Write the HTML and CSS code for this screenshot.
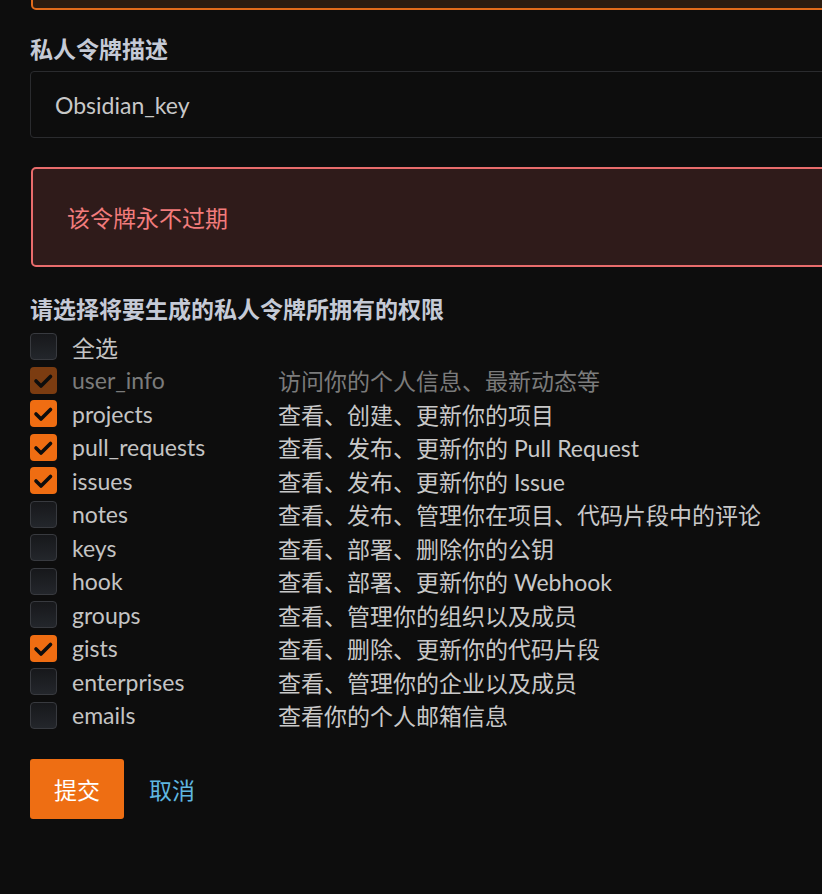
FILE: index.html
```html
<!DOCTYPE html>
<html lang="zh-CN">
<head>
<meta charset="utf-8">
<title>私人令牌</title>
<link rel="stylesheet" href="styles.css">
</head>
<body>
<div class="page">
  <div class="prev-box"></div>

  <label class="field-label">私人令牌描述</label>
  <div class="text-input">Obsidian_key</div>

  <div class="alert">该令牌永不过期</div>

  <div class="field-label perms-title">请选择将要生成的私人令牌所拥有的权限</div>

  <ul class="perms">
    <li class="perm"><span class="cb"></span><span class="name">全选</span></li>
    <li class="perm disabled"><span class="cb on"><svg viewBox="0 0 27 27"><polyline points="6,14 11,19 20.5,9.5"/></svg></span><span class="name">user_info</span><span class="desc">访问你的个人信息、最新动态等</span></li>
    <li class="perm"><span class="cb on"><svg viewBox="0 0 27 27"><polyline points="6,14 11,19 20.5,9.5"/></svg></span><span class="name">projects</span><span class="desc">查看、创建、更新你的项目</span></li>
    <li class="perm"><span class="cb on"><svg viewBox="0 0 27 27"><polyline points="6,14 11,19 20.5,9.5"/></svg></span><span class="name">pull_requests</span><span class="desc">查看、发布、更新你的 Pull Request</span></li>
    <li class="perm"><span class="cb on"><svg viewBox="0 0 27 27"><polyline points="6,14 11,19 20.5,9.5"/></svg></span><span class="name">issues</span><span class="desc">查看、发布、更新你的 Issue</span></li>
    <li class="perm"><span class="cb"></span><span class="name">notes</span><span class="desc">查看、发布、管理你在项目、代码片段中的评论</span></li>
    <li class="perm"><span class="cb"></span><span class="name">keys</span><span class="desc">查看、部署、删除你的公钥</span></li>
    <li class="perm"><span class="cb"></span><span class="name">hook</span><span class="desc">查看、部署、更新你的 Webhook</span></li>
    <li class="perm"><span class="cb"></span><span class="name">groups</span><span class="desc">查看、管理你的组织以及成员</span></li>
    <li class="perm"><span class="cb on"><svg viewBox="0 0 27 27"><polyline points="6,14 11,19 20.5,9.5"/></svg></span><span class="name">gists</span><span class="desc">查看、删除、更新你的代码片段</span></li>
    <li class="perm"><span class="cb"></span><span class="name">enterprises</span><span class="desc">查看、管理你的企业以及成员</span></li>
    <li class="perm"><span class="cb"></span><span class="name">emails</span><span class="desc">查看你的个人邮箱信息</span></li>
  </ul>

  <div class="actions">
    <button class="btn-submit">提交</button>
    <a class="btn-cancel">取消</a>
  </div>
</div>
</body>
</html>
```
FILE: styles.css
```css
html, body {
  margin: 0;
  padding: 0;
  background: #0d0d0d;
  overflow: hidden;
}
body {
  font-family: "Lato", "Noto Sans CJK SC", sans-serif;
  font-size: 23px;
  color: #c6c6c6;
}
.page {
  width: 1000px;
  padding-left: 30px;
}
.prev-box {
  margin-top: -50px;
  margin-left: 1px;
  height: 56px;
  background: #2b1c10;
  border: 2px solid #e06b1b;
  border-radius: 5px;
}
.field-label {
  display: block;
  margin-top: 23px;
  font-weight: 700;
  line-height: 32px;
  color: #c5cad6;
}
.text-input {
  margin-top: 6px;
  height: 65px;
  border: 1px solid #2a2b2e;
  border-radius: 4px;
  padding-left: 24px;
  display: flex;
  align-items: center;
  color: #c8c8c8;
}
.alert {
  margin-top: 29px;
  margin-left: 1px;
  height: 96px;
  border: 2px solid #e86c6c;
  border-radius: 5px;
  background: #2f1b1a;
  padding-left: 34px;
  display: flex;
  align-items: center;
  color: #f27c7c;
}
.perms-title {
  margin-top: 26px;
}
.perms {
  list-style: none;
  margin: 5px 0 0;
  padding: 0;
}
.perm {
  height: 33.5px;
  display: flex;
  align-items: center;
}
.cb {
  flex: none;
  width: 25px;
  height: 25px;
  border: 1px solid #383a3f;
  border-radius: 4px;
  background: linear-gradient(#17181b, #23262b);
  display: flex;
  align-items: center;
  justify-content: center;
}
.cb.on {
  width: 27px;
  height: 27px;
  border: none;
  background: #ef6d12;
}
.cb svg {
  width: 27px;
  height: 27px;
}
.cb polyline {
  fill: none;
  stroke: #0d0d0d;
  stroke-width: 3.6;
  stroke-linecap: round;
  stroke-linejoin: round;
}
.name {
  margin-left: 15px;
  width: 206px;
  flex: none;
  color: #c4c4c4;
}
.desc {
  color: #c8c8c8;
  white-space: nowrap;
}
.perm.disabled .cb.on {
  background: #7b3c11;
}
.perm.disabled .name,
.perm.disabled .desc {
  color: #7b7b7b;
}
.actions {
  margin-top: 27px;
  display: flex;
  align-items: center;
}
.btn-submit {
  width: 94px;
  height: 60px;
  border: none;
  border-radius: 3px;
  background: #ee6e13;
  color: #ffffff;
  font-family: "Noto Sans CJK SC", sans-serif;
  font-size: 23px;
  padding: 0;
}
.btn-cancel {
  margin-left: 25px;
  color: #5fb7e0;
  font-family: "Noto Sans CJK SC", sans-serif;
  font-size: 23px;
}
```
